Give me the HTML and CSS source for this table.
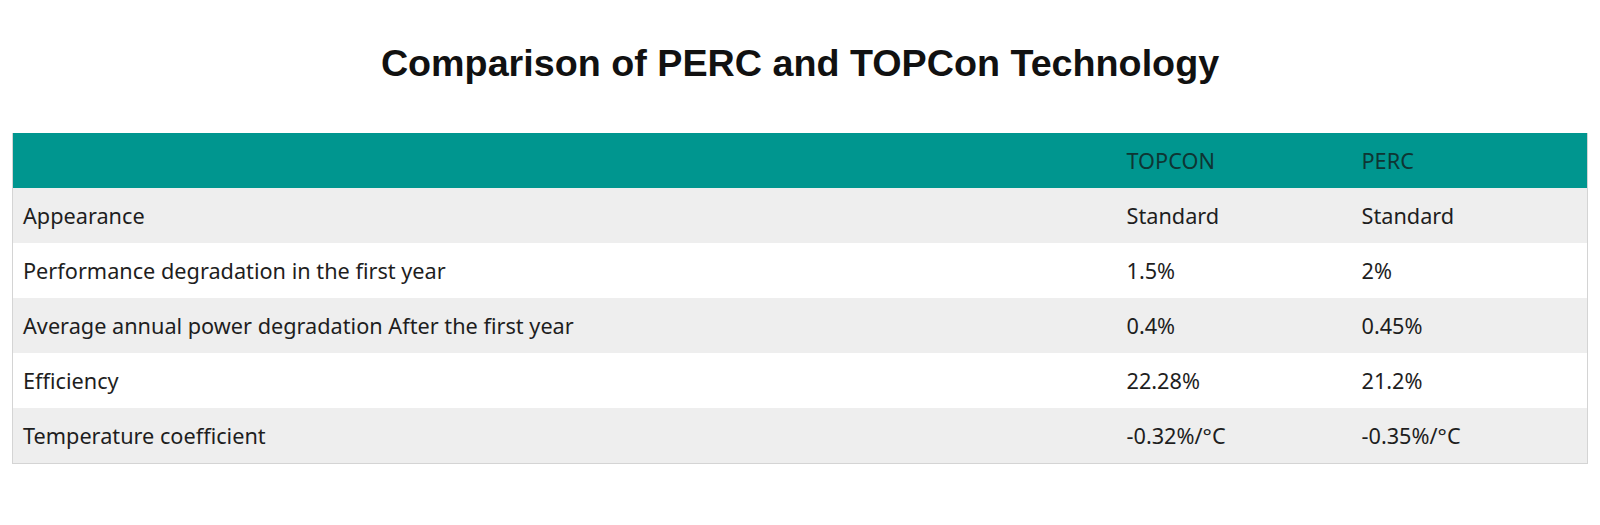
FILE: index.html
```html
<!DOCTYPE html>
<html lang="en">
<head>
<meta charset="utf-8">
<title>Comparison of PERC and TOPCon Technology</title>
<link rel="stylesheet" href="styles.css">
</head>
<body>
<main class="page">
  <h1 class="title">Comparison of PERC and TOPCon Technology</h1>
  <table class="cmp">
    <colgroup>
      <col class="c-label">
      <col class="c-topcon">
      <col class="c-perc">
    </colgroup>
    <thead>
      <tr><th></th><th>TOPCON</th><th>PERC</th></tr>
    </thead>
    <tbody>
      <tr><td>Appearance</td><td>Standard</td><td>Standard</td></tr>
      <tr><td>Performance degradation in the first year</td><td>1.5%</td><td>2%</td></tr>
      <tr><td>Average annual power degradation After the first year</td><td>0.4%</td><td>0.45%</td></tr>
      <tr><td>Efficiency</td><td>22.28%</td><td>21.2%</td></tr>
      <tr><td>Temperature coefficient</td><td>-0.32%/°C</td><td>-0.35%/°C</td></tr>
    </tbody>
  </table>
</main>
</body>
</html>
```
FILE: styles.css
```css
html, body {
  margin: 0;
  padding: 0;
  background: #ffffff;
}
.page {
  padding: 0 12px 0 12px;
}
.title {
  margin: 0;
  padding-top: 43px;
  padding-bottom: 50px;
  text-align: center;
  font-family: "Liberation Sans", Arial, sans-serif;
  font-weight: 700;
  font-size: 37.7px;
  line-height: 40px;
  color: #111111;
}
.cmp {
  width: 100%;
  border-collapse: collapse;
  border: 1px solid #d4d4d4;
  border-top: none;
  font-family: "Noto Sans", "Open Sans", sans-serif;
  font-size: 21.7px;
  color: #1e1e1e;
}
.c-topcon { width: 235px; }
.c-perc { width: 236px; }
.cmp th, .cmp td {
  height: 55px;
  padding: 0 10px;
  text-align: left;
  vertical-align: middle;
  font-weight: 400;
}
.cmp thead tr {
  background: #00968f;
}
.cmp th {
  color: #0e3533;
}
.cmp tbody tr:nth-child(odd) { background: #eeeeee; }
.cmp tbody tr:nth-child(even) { background: #ffffff; }
```
